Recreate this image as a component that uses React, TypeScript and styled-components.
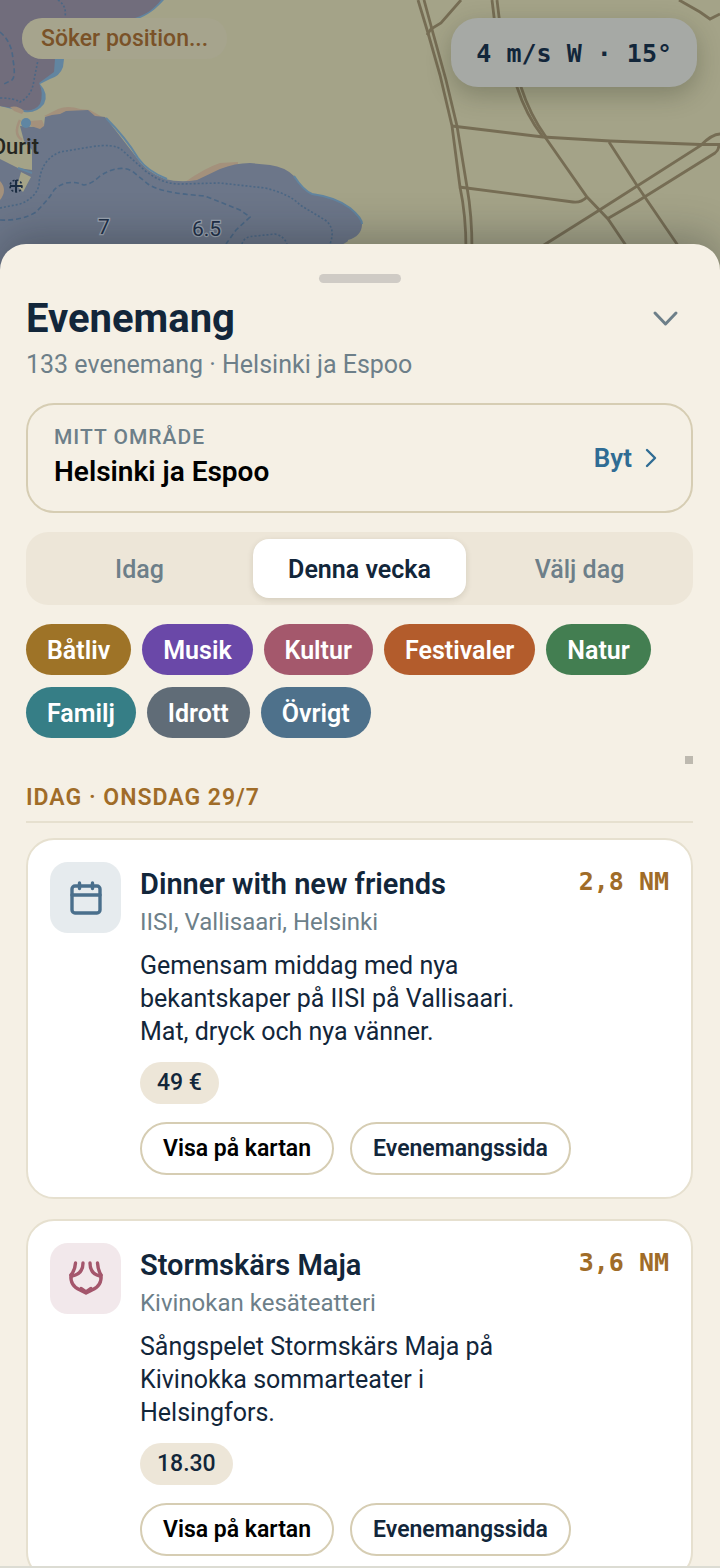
import React, { useState } from "react";
import styled, { createGlobalStyle } from "styled-components";

const color = {
  sand: "#f5f0e5",
  sandDeep: "#ede6d8",
  line: "#d6cdb3",
  lineSoft: "#e6e0cf",
  navy: "#12263a",
  slate: "#6d7f89",
  brass: "#a06c28",
  blue: "#2f6c94",
};

const GlobalStyle = createGlobalStyle`
  *, *::before, *::after { box-sizing: border-box; }
  body {
    margin: 0;
    background: ${color.sand};
    color: ${color.navy};
    font-family: Roboto, "Liberation Sans", sans-serif;
  }
  h1, h2, h3, p { margin: 0; }
  button { font-family: inherit; cursor: pointer; }
`;

const Shell = styled.div`
  height: 100vh;
  display: flex;
  flex-direction: column;
  overflow: hidden;
`;

const MapArea = styled.header`
  position: relative;
  flex: none;
  height: 272px;
  padding: 18px 23px 0 22px;
  display: flex;
  justify-content: space-between;
  align-items: flex-start;
  overflow: hidden;
  background: #a4a388;
`;

const MapCanvas = styled.svg`
  position: absolute;
  inset: 0;
  width: 100%;
  height: 100%;
`;

const PositionStatus = styled.div`
  position: relative;
  padding: 0 19px;
  border-radius: 20px;
  background: #a6a48d;
  color: #7a5228;
  font-size: 23px;
  font-weight: 500;
  line-height: 41px;
`;

const WindPill = styled.div`
  position: relative;
  padding: 2px 25px 0;
  border-radius: 27px;
  background: #a6a9a5;
  box-shadow: 0 8px 24px rgba(40, 45, 30, 0.28);
  color: ${color.navy};
  font: 700 25px/67px "DejaVu Sans Mono", "Liberation Mono", monospace;
`;

const Sheet = styled.main`
  position: relative;
  flex: 1;
  min-height: 0;
  margin-top: -28px;
  padding: 30px 27px 0 26px;
  display: flex;
  flex-direction: column;
  border-radius: 26px 26px 0 0;
  background: ${color.sand};
  box-shadow: 0 -8px 40px rgba(20, 25, 30, 0.3);
`;

const Handle = styled.div`
  flex: none;
  align-self: center;
  width: 82px;
  height: 9px;
  border-radius: 5px;
  background: #cfcbc5;
`;

const TitleRow = styled.div`
  display: flex;
  justify-content: space-between;
  align-items: center;
  margin-top: 14px;
  padding-right: 10px;
`;

const Title = styled.h1`
  font-size: 40px;
  font-weight: 700;
  line-height: 44px;
`;

const CollapseButton = styled.button`
  display: flex;
  padding: 0;
  border: 0;
  background: none;
  color: ${color.slate};
`;

const Summary = styled.p`
  margin-top: 8px;
  color: ${color.slate};
  font-size: 25px;
  line-height: 32px;
`;

const AreaCard = styled.button`
  display: flex;
  flex: none;
  justify-content: space-between;
  align-items: center;
  margin-top: 22px;
  padding: 18px 33px 21px 26px;
  border: 2px solid ${color.line};
  border-radius: 28px;
  background: none;
  text-align: left;
`;

const AreaText = styled.span`
  display: grid;
  gap: 3px;
`;

const AreaLabel = styled.span`
  color: ${color.slate};
  font-size: 21px;
  font-weight: 500;
  line-height: 28px;
  letter-spacing: 1px;
  text-transform: uppercase;
`;

const AreaName = styled.span`
  color: #000;
  font-size: 28px;
  font-weight: 600;
  line-height: 36px;
`;

const AreaAction = styled.span`
  display: flex;
  align-items: center;
  gap: 12px;
  padding-top: 2px;
  color: ${color.blue};
  font-size: 26px;
  font-weight: 600;
`;

const Segments = styled.div`
  flex: none;
  display: grid;
  grid-template-columns: repeat(3, 1fr);
  gap: 7px;
  margin-top: 19px;
  padding: 7px;
  border-radius: 22px;
  background: ${color.sandDeep};
`;

const Segment = styled.button<{ $active: boolean }>`
  height: 59px;
  padding: 2px 0 0;
  border: 0;
  border-radius: 16px;
  background: ${(p) => (p.$active ? "#fff" : "none")};
  box-shadow: ${(p) => (p.$active ? "0 2px 6px rgba(60, 50, 20, 0.14)" : "none")};
  color: ${(p) => (p.$active ? color.navy : color.slate)};
  font-size: 25px;
  font-weight: ${(p) => (p.$active ? 600 : 500)};
`;

const Chips = styled.div`
  display: flex;
  flex: none;
  flex-wrap: wrap;
  gap: 12px 11px;
  margin-top: 19px;
`;

const Chip = styled.button<{ $tone: string }>`
  height: 51px;
  padding: 1px 21px 0;
  border: 0;
  border-radius: 26px;
  background: ${(p) => p.$tone};
  color: #fff;
  font-size: 25px;
  font-weight: 600;
`;

const ScrollMark = styled.div`
  flex: none;
  align-self: flex-end;
  width: 8px;
  height: 8px;
  margin-top: 18px;
  background: #bdb9af;
`;

const EventList = styled.section`
  flex: 1;
  min-height: 0;
  margin-top: 20px;
  overflow: hidden;
`;

const DayHeading = styled.h2`
  padding-bottom: 9px;
  border-bottom: 2px solid ${color.lineSoft};
  color: ${color.brass};
  font-size: 23px;
  font-weight: 600;
  line-height: 28px;
  letter-spacing: 1px;
  text-transform: uppercase;
`;

const Cards = styled.div`
  display: grid;
  gap: 20px;
  margin-top: 15px;
`;

const Card = styled.article`
  display: grid;
  grid-template-columns: 71px 1fr auto;
  align-items: start;
  padding: 22px;
  border: 2px solid ${color.lineSoft};
  border-radius: 28px;
  background: #fff;
`;

const IconTile = styled.div<{ $ink: string; $tint: string }>`
  display: grid;
  place-items: center;
  height: 71px;
  border-radius: 18px;
  background: ${(p) => p.$tint};
  color: ${(p) => p.$ink};
`;

const CardBody = styled.div`
  padding: 5px 0 0 19px;
`;

const EventTitle = styled.h3`
  font-size: 29px;
  font-weight: 600;
  line-height: 34px;
`;

const Place = styled.p`
  margin-top: 6px;
  color: ${color.slate};
  font-size: 24px;
  line-height: 30px;
`;

const Description = styled.p`
  max-width: 400px;
  margin-top: 12px;
  font-size: 25px;
  line-height: 33px;
`;

const Tag = styled.span`
  display: inline-block;
  margin-top: 14px;
  padding: 0 17px;
  border-radius: 21px;
  background: ${color.sandDeep};
  font-size: 23px;
  font-weight: 500;
  line-height: 42px;
  vertical-align: top;
`;

const Actions = styled.div`
  display: flex;
  gap: 16px;
  margin-top: 18px;
`;

const MapButton = styled.button`
  height: 53px;
  padding: 0 21px;
  border: 2px solid ${color.line};
  border-radius: 27px;
  background: none;
  color: #000;
  font-size: 23px;
  font-weight: 600;
  line-height: 50px;
  white-space: nowrap;
`;

const PageLink = styled(MapButton).attrs({ as: "a" })<{ href: string }>`
  color: ${color.navy};
  text-decoration: none;
`;

const Distance = styled.span`
  color: ${color.brass};
  font: 700 25px/34px "DejaVu Sans Mono", "Liberation Mono", monospace;
  margin-top: 3px;
`;

const BottomEdge = styled.footer`
  position: relative;
  flex: none;
  height: 2px;
  background: #dcdcd3;
`;

function HarbourMap() {
  return (
    <MapCanvas viewBox="0 0 720 272" preserveAspectRatio="xMidYMin slice" aria-hidden="true">
      {/* restricted water, north-west */}
      <path d="M0 0H164C156 9 147 16 137 19L64 59L63 67Q60 76 50 79L40 84Q49 94 44 104Q36 114 24 112L0 106Z" fill="#6285a0" />
      <path d="M0 0H161C154 9 147 14 135 18L55 59L54 72L39 83Q44 93 40 104Q34 112 24 110L0 106Z" fill="#716d7c" />
      {/* shoreline sand */}
      <path d="M10 107Q18 105 24 111L22 114L14 111Z" fill="#a4917c" />
      <path d="M44 116L58 109Q68 105 80 109L90 110L104 118L60 120Z" fill="#a4917c" />
      <path d="M30 121L42 120L45 127L41 130L31 126Z" fill="#a4917c" />
      <path d="M185 182Q205 168 220 163L238 162V168L200 184Z" fill="#a4917c" />
      {/* main bay */}
      <path
        d="M45 117L52 115L60 114L66 111L88 110L95 116L105 117L120 136L137 158Q145 171 165 179Q180 183 197 180L220 169Q235 163 250 163L270 165Q285 167 294 176Q303 190 312 194Q335 197 350 208Q362 218 362 224Q362 236 348 240L344 272H0V159L8 163L18 168L32 170V150L24 141L20 126L34 127L40 129L44 126Z"
        fill="#6c7689"
      />
      <path d="M20 120Q13 134 22 140" fill="none" stroke="#a4917c" strokeWidth="2.5" />
      <path d="M106 118Q126 138 138 158Q147 171 167 179" fill="none" stroke="#6285a0" strokeWidth="2" />
      <path d="M294 176Q303 190 312 194Q335 197 350 208Q362 218 362 224" fill="none" stroke="#6285a0" strokeWidth="2" />
      <circle cx="26" cy="123" r="5" fill="#5f86a3" />
      <path d="M18 168L32 173" stroke="#6285a0" strokeWidth="2" />
      <path d="M21 172L31 177L23 192L17 186Z" fill="#a4a388" />
      <path d="M0 181Q8 190 0 200Z" fill="#a4917c" />
      <path d="M340 246L350 240H372V272H340Z" fill="#a4a388" />
      {/* depth contours */}
      <g fill="none" stroke="#4b6785" strokeWidth="1.6">
        <g strokeDasharray="2 2">
          <path d="M58 0Q67 6 65 17" />
          <path d="M0 98Q14 98 20 102Q32 96 34 80L38 60" />
          <path d="M0 208L20 204Q36 198 39 185Q40 160 60 152L90 147Q114 143 122 150L142 168Q160 184 180 184L220 183L265 188Q290 194 300 205L325 220Q336 228 330 244" />
          <path d="M242 244Q244 236 256 236L275 234Q284 236 287 244" />
        </g>
        <g strokeDasharray="5 3">
          <path d="M0 32Q12 42 13 60Q16 76 12 80L2 85" />
          <path d="M0 220Q22 221 36 212Q50 198 54 190Q66 178 84 185Q92 184 100 176Q118 164 132 171L148 184Q160 193 205 196L240 210L250 217L236 230L226 244" />
        </g>
      </g>
      {/* roads */}
      <g fill="none" stroke="#766d54" strokeWidth="2.8">
        <path d="M418 0L428 33L440 75L452 126L460 187Q466 215 466 250" />
        <path d="M424 0L433 33L446 80L457 126L467 187Q472 215 472 250" />
        <path d="M461 0L441 23L431 29L427 35" />
        <path d="M492 0L495 25L517 87Q526 115 543 137" />
        <path d="M497 0L500 25L521 87Q530 115 546 137" />
        <path d="M452 126L543 137L610 141L700 144.500H720" />
        <path d="M545 137L587 197L608 219L629 250" />
        <path d="M459 187L573 202Q581 203 587 197" />
        <path d="M536 250L598 211L700 146Q712 134 720 134" />
        <path d="M607 219L638 201L715 153Q719 150 719 144" />
        <path d="M609 142L638 187L681 250" />
        <path d="M679 0L700 12L710 19L720 14" />
      </g>
      {/* rock awash */}
      <g stroke="#1b2d42" fill="none">
        <path d="M10 186H22M16 180V192" strokeWidth="2" />
        <circle cx="16" cy="186" r="6" strokeWidth="1.600" strokeDasharray="2 2" />
      </g>
      <text x="39" y="154" textAnchor="end" fontSize="22" fontWeight="500" fill="#25261f">Ourit</text>
      <g fontSize="21" fill="#1f3048" stroke="#9aa3b0" strokeWidth="2.5" paintOrder="stroke">
        <text x="98" y="234">7</text>
        <text x="192" y="236">6.5</text>
      </g>
    </MapCanvas>
  );
}

function CalendarIcon() {
  return (
    <svg width="36" height="36" viewBox="0 0 36 36" fill="none" stroke="currentColor" strokeWidth="3.4" strokeLinecap="round" aria-hidden="true">
      <rect x="4" y="6" width="28" height="27" rx="3" />
      <path d="M4 15H32M11.500 3V8.500M24.500 3V8.500" />
    </svg>
  );
}

function CurtainIcon() {
  return (
    <svg width="36" height="36" viewBox="0 0 36 36" fill="none" stroke="currentColor" strokeWidth="3.4" strokeLinecap="round" strokeLinejoin="round" aria-hidden="true">
      <path d="M7.500 2Q7 9 3 14M15 2Q15 13 4 15M22 2Q22 13 32 15M29.500 2Q30 9 33 14" />
      <path d="M3 14Q2 25 12 29L18 32L24 29Q34 25 33 14" />
      <path d="M13 27.500L18 31L23 27.500" />
    </svg>
  );
}

const periods = ["Idag", "Denna vecka", "Välj dag"];

const categories = [
  { name: "Båtliv", tone: "#9e7327" },
  { name: "Musik", tone: "#6a48a8" },
  { name: "Kultur", tone: "#a4586c" },
  { name: "Festivaler", tone: "#b35c2c" },
  { name: "Natur", tone: "#437e51" },
  { name: "Familj", tone: "#367e86" },
  { name: "Idrott", tone: "#606c77" },
  { name: "Övrigt", tone: "#4e718b" },
];

const events = [
  {
    title: "Dinner with new friends",
    place: "IISI, Vallisaari, Helsinki",
    text: "Gemensam middag med nya bekantskaper på IISI på Vallisaari. Mat, dryck och nya vänner.",
    tag: "49 €",
    distance: "2,8 NM",
    icon: <CalendarIcon />,
    ink: "#4a6f8c",
    tint: "#e6ebee",
  },
  {
    title: "Stormskärs Maja",
    place: "Kivinokan kesäteatteri",
    text: "Sångspelet Stormskärs Maja på Kivinokka sommarteater i Helsingfors.",
    tag: "18.30",
    distance: "3,6 NM",
    icon: <CurtainIcon />,
    ink: "#a4566c",
    tint: "#f2e8eb",
  },
];

export default function App() {
  const [period, setPeriod] = useState("Denna vecka");

  return (
    <Shell>
      <GlobalStyle />
      <MapArea>
        <HarbourMap />
        <PositionStatus role="status">Söker position...</PositionStatus>
        <WindPill>4 m/s W · 15°</WindPill>
      </MapArea>

      <Sheet>
        <Handle />
        <TitleRow>
          <Title>Evenemang</Title>
          <CollapseButton type="button" aria-label="Minimera">
            <svg width="36" height="36" viewBox="0 0 36 36" fill="none" stroke="currentColor" strokeWidth="3" strokeLinecap="round" strokeLinejoin="round" aria-hidden="true">
              <path d="M8 12L18.500 23L29 12" />
            </svg>
          </CollapseButton>
        </TitleRow>
        <Summary>133 evenemang · Helsinki ja Espoo</Summary>

        <AreaCard type="button">
          <AreaText>
            <AreaLabel>Mitt område</AreaLabel>
            <AreaName>Helsinki ja Espoo</AreaName>
          </AreaText>
          <AreaAction>
            Byt
            <svg width="14" height="20" viewBox="0 0 14 20" fill="none" stroke="currentColor" strokeWidth="2.400" strokeLinecap="round" strokeLinejoin="round" aria-hidden="true">
              <path d="M3 2L11 10L3 18" />
            </svg>
          </AreaAction>
        </AreaCard>

        <Segments>
          {periods.map((name) => (
            <Segment key={name} type="button" $active={name === period} aria-pressed={name === period} onClick={() => setPeriod(name)}>
              {name}
            </Segment>
          ))}
        </Segments>

        <Chips>
          {categories.map((c) => (
            <Chip key={c.name} type="button" $tone={c.tone}>
              {c.name}
            </Chip>
          ))}
        </Chips>

        <ScrollMark />

        <EventList>
          <DayHeading>Idag · onsdag 29/7</DayHeading>
          <Cards>
            {events.map((e) => (
              <Card key={e.title}>
                <IconTile $ink={e.ink} $tint={e.tint}>{e.icon}</IconTile>
                <CardBody>
                  <EventTitle>{e.title}</EventTitle>
                  <Place>{e.place}</Place>
                  <Description>{e.text}</Description>
                  <Tag>{e.tag}</Tag>
                  <Actions>
                    <MapButton type="button">Visa på kartan</MapButton>
                    <PageLink href="#evenemang">Evenemangssida</PageLink>
                  </Actions>
                </CardBody>
                <Distance>{e.distance}</Distance>
              </Card>
            ))}
          </Cards>
        </EventList>
      </Sheet>
      <BottomEdge />
    </Shell>
  );
}
